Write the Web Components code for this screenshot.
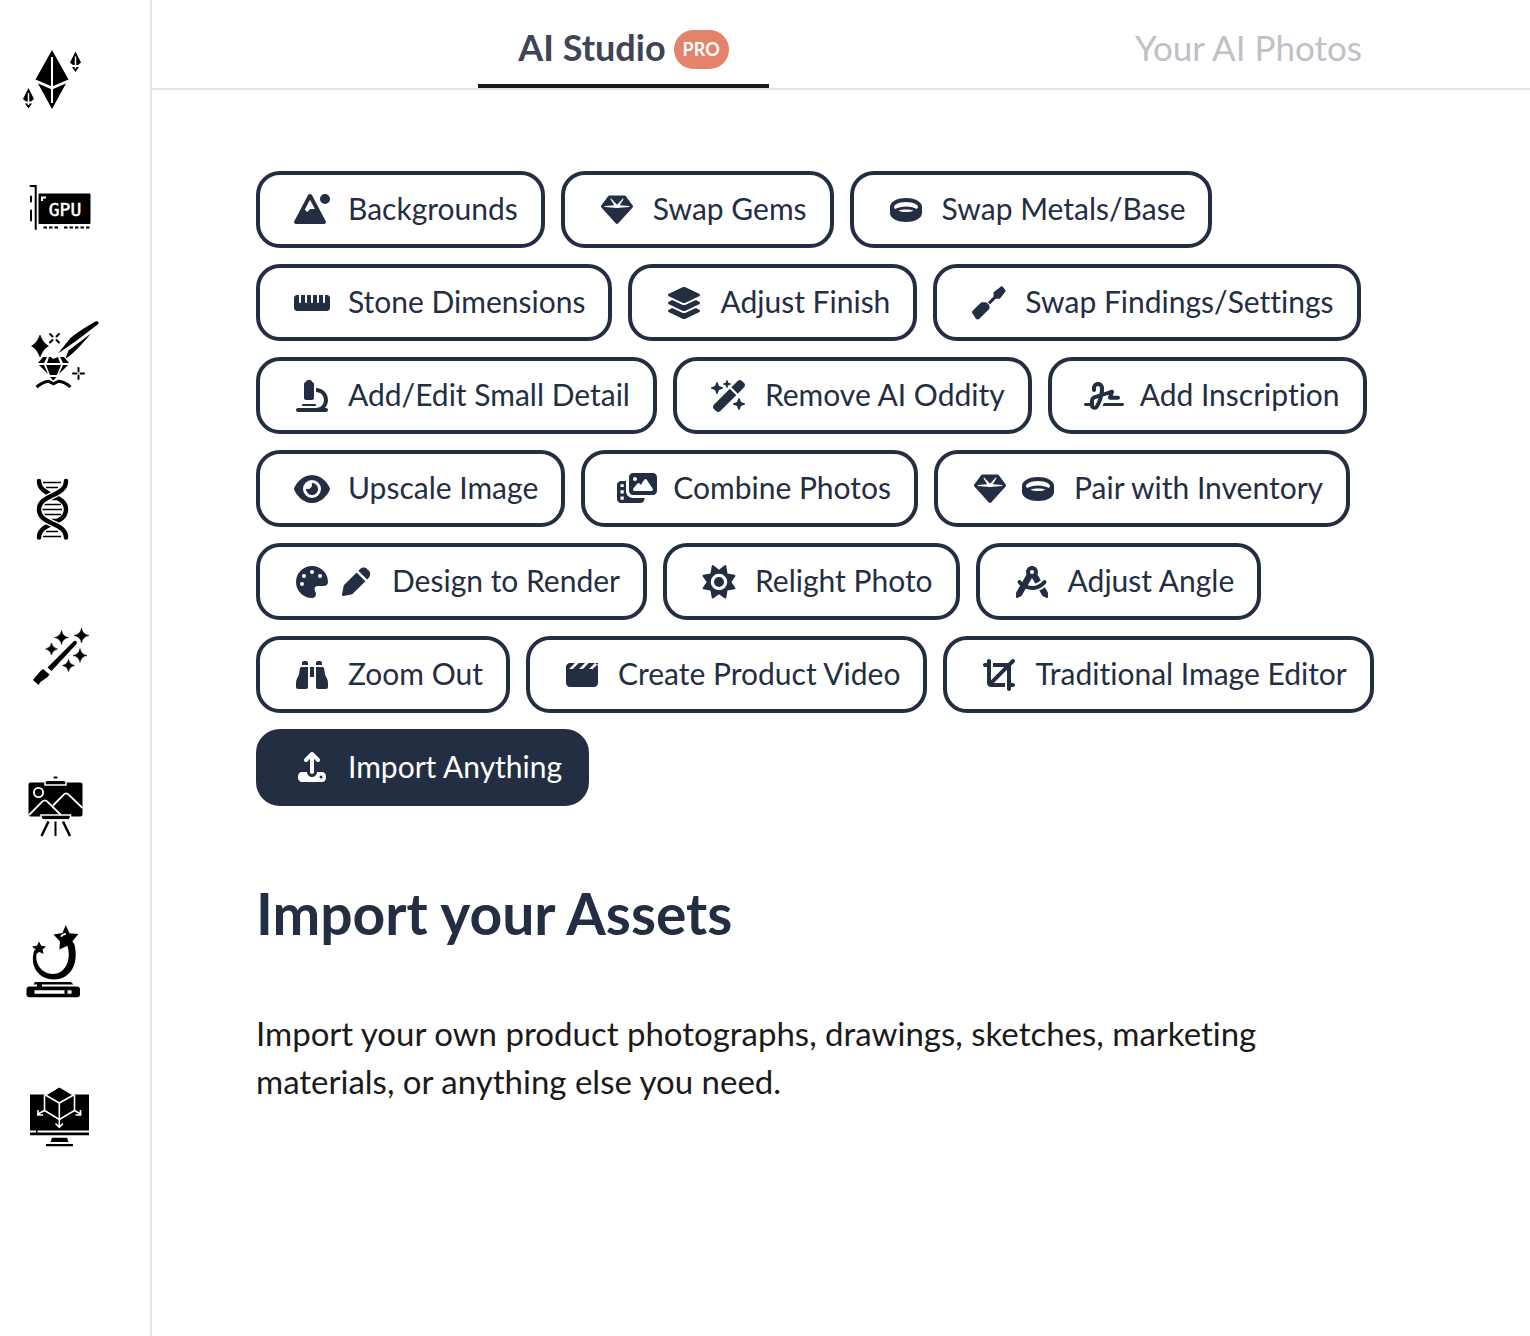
<!DOCTYPE html>
<html lang="en">
<head>
<meta charset="utf-8">
<title>AI Studio</title>
<style>
  body {
    margin: 0;
    background: #fff;
    color: #242e43;
    font-family: Lato, "Open Sans", sans-serif;
    font-variant-ligatures: none;
  }
</style>
</head>
<body>
<studio-shell>
  <side-rail slot="rail"></side-rail>

  <studio-tabs slot="tabs">
    <studio-tab active>AI Studio<pro-badge slot="badge">PRO</pro-badge></studio-tab>
    <studio-tab>Your AI Photos</studio-tab>
  </studio-tabs>

  <tool-list>
    <tool-chip icons="mountain">Backgrounds</tool-chip>
    <tool-chip icons="gem">Swap Gems</tool-chip>
    <tool-chip icons="ring">Swap Metals/Base</tool-chip>
    <tool-chip icons="ruler">Stone Dimensions</tool-chip>
    <tool-chip icons="layers">Adjust Finish</tool-chip>
    <tool-chip icons="screwdriver">Swap Findings/Settings</tool-chip>
    <tool-chip icons="microscope">Add/Edit Small Detail</tool-chip>
    <tool-chip icons="wand">Remove AI Oddity</tool-chip>
    <tool-chip icons="signature">Add Inscription</tool-chip>
    <tool-chip icons="eye">Upscale Image</tool-chip>
    <tool-chip icons="photos">Combine Photos</tool-chip>
    <tool-chip icons="gem ring">Pair with Inventory</tool-chip>
    <tool-chip icons="palette pen" tight>Design to Render</tool-chip>
    <tool-chip icons="sun">Relight Photo</tool-chip>
    <tool-chip icons="compass">Adjust Angle</tool-chip>
    <tool-chip icons="binoculars">Zoom Out</tool-chip>
    <tool-chip icons="clapper">Create Product Video</tool-chip>
    <tool-chip icons="crop">Traditional Image Editor</tool-chip>
    <tool-chip icons="upload" selected>Import Anything</tool-chip>
  </tool-list>

  <tool-intro>
    <span slot="title">Import your Assets</span>
    Import your own product photographs, drawings, sketches, marketing materials, or anything else you need.
  </tool-intro>
</studio-shell>

<script>
// Chip icons: [glyph width, path]. Every glyph is 512 units high.
const ICONS = {
  mountain: [576, "M223 18 4 436c-11 21 4 44 27 44h450c23 0 38-23 27-44L289 18c-14-24-52-24-66 0zM256 92l-84 158 40 36 46-46h76zM496 0a80 80 0 1 1 0 160 80 80 0 1 1 0-160z"],
  gem: [512, "M116.7 33.8c4.5-6.1 11.7-9.8 19.3-9.8l240 0c7.6 0 14.8 3.6 19.3 9.8l112 152c6.8 9.2 6.1 21.9-1.5 30.4l-232 256c-4.5 5-11 7.9-17.8 7.9s-13.2-2.9-17.8-7.9l-232-256c-7.7-8.5-8.3-21.2-1.5-30.4l112-152zm38.5 39.8c-3.3 2.5-4.2 7-2.1 10.5l57.4 95.6L63.3 192c-4.1 .3-7.3 3.8-7.3 8s3.2 7.6 7.3 8l192 16c.4 0 .9 0 1.3 0l192-16c4.1-.3 7.3-3.8 7.3-8s-3.2-7.6-7.3-8L301.5 179.8l57.4-95.6c2.1-3.5 1.2-8.1-2.1-10.5s-7.9-2-10.7 1L256 172.2 165.9 74.6c-2.8-3-7.4-3.4-10.7-1z"],
  ring: [512, "M64 208c0 7.8 4.4 18.7 17.1 30.3C126.5 214.1 188.9 200 256 200s129.5 14.1 174.9 38.3C443.6 226.7 448 215.8 448 208c0-12.3-10.8-32-47.9-50.6C364.9 139.8 314 128 256 128s-108.9 11.8-144.1 29.4C74.8 176 64 195.7 64 208zm192 40c-47 0-89.3 7.6-122.9 19.7C166.3 280.2 208.8 288 256 288s89.7-7.8 122.9-20.3C345.3 255.6 303 248 256 248zM0 208c0-49.6 39.4-85.8 83.3-107.8C129.1 77.3 190.3 64 256 64s126.9 13.3 172.7 36.2c43.9 22 83.3 58.2 83.3 107.8l0 96c0 49.6-39.4 85.8-83.3 107.8C382.9 434.7 321.7 448 256 448s-126.9-13.3-172.7-36.2C39.4 389.8 0 353.6 0 304l0-96z"],
  ruler: [576, "M0 336c0 26.5 21.5 48 48 48h480c26.5 0 48-21.5 48-48V176c0-26.5-21.5-48-48-48h-32v112c0 8.8-7.2 16-16 16s-16-7.2-16-16V128h-64v112c0 8.8-7.2 16-16 16s-16-7.2-16-16V128h-64v112c0 8.8-7.2 16-16 16s-16-7.2-16-16V128h-64v112c0 8.8-7.2 16-16 16s-16-7.2-16-16V128h-64v112c0 8.8-7.2 16-16 16s-16-7.2-16-16V128H48c-26.5 0-48 21.5-48 48v160z"],
  layers: [576, "M264.5 5.2c14.9-6.9 32.1-6.9 47 0l218.6 101c8.5 3.9 13.9 12.4 13.9 21.8s-5.4 17.9-13.9 21.8l-218.6 101c-14.9 6.9-32.1 6.9-47 0L45.9 149.8C37.4 145.8 32 137.3 32 128s5.4-17.9 13.9-21.8L264.5 5.2zM476.9 209.6l53.2 24.6c8.5 3.9 13.9 12.4 13.9 21.8s-5.4 17.9-13.9 21.8l-218.6 101c-14.9 6.9-32.1 6.9-47 0L45.9 277.8C37.4 273.8 32 265.3 32 256s5.4-17.9 13.9-21.8l53.2-24.6 152 70.2c23.4 10.8 50.4 10.8 73.8 0l152-70.2zm-152 198.2l152-70.2 53.2 24.6c8.5 3.9 13.9 12.4 13.9 21.8s-5.4 17.9-13.9 21.8l-218.6 101c-14.9 6.9-32.1 6.9-47 0L45.9 405.8C37.4 401.8 32 393.3 32 384s5.4-17.9 13.9-21.8l53.2-24.6 152 70.2c23.4 10.8 50.4 10.8 73.8 0z"],
  screwdriver: [512, "M474 -4c-9-9-22-9-32-2l-104 80c-6 5-9 12-9 19v60l-92 92c7 4 13 9 19 15s11 12 15 19l92-92h54c8 0 15-4 19-9l80-104c7-10 7-23-2-32zM142 244c-9 0-16 4-22 10L-5 379c-12 12-14 31-4 45l54 78c13 20 41 23 57 6l150-150c9-9 14-20 14-32 0-46-36-82-82-82z"],
  microscope: [512, "M160 32c0-17.7 14.3-32 32-32h32c17.7 0 32 14.3 32 32c17.7 0 32 14.3 32 32V288c0 17.7-14.3 32-32 32H160c-17.7 0-32-14.3-32-32V64c0-17.7 14.3-32 32-32zM32 448H320c70.7 0 128-57.3 128-128s-57.3-128-128-128V128c106 0 192 86 192 192c0 49.2-18.5 94-48.9 128H480c17.7 0 32 14.3 32 32s-14.3 32-32 32H32c-17.7 0-32-14.3-32-32s14.3-32 32-32zm80-64H304c8.8 0 16 7.2 16 16s-7.2 16-16 16H112c-8.8 0-16-7.2-16-16s7.2-16 16-16z"],
  wand: [576, "M234.7 42.7L197 56.8c-3 1.1-5 4-5 7.2s2 6.1 5 7.2l37.7 14.1L248.8 123c1.1 3 4 5 7.2 5s6.1-2 7.2-5l14.1-37.7L315 71.2c3-1.1 5-4 5-7.2s-2-6.1-5-7.2L277.3 42.7 263.2 5c-1.1-3-4-5-7.2-5s-6.1 2-7.2 5zM46.1 395.4c-18.7 18.7-18.7 49.1 0 67.9l34.6 34.6c18.7 18.7 49.1 18.7 67.9 0L404.3 242.3 301.8 139.8zM325.8 115.8 428.3 218.3 529.9 116.5c18.7-18.7 18.7-49.1 0-67.9L495.3 14.1c-18.7-18.7-49.1-18.7-67.9 0zM7.5 117.2C3 118.9 0 123.2 0 128s3 9.1 7.5 10.8L64 160l21.2 56.5c1.7 4.5 6 7.5 10.8 7.5s9.1-3 10.8-7.5L128 160l56.5-21.2c4.5-1.7 7.5-6 7.5-10.8s-3-9.1-7.5-10.8L128 96 106.8 39.5C105.1 35 100.8 32 96 32s-9.1 3-10.8 7.5L64 96zm352 256c-4.5 1.7-7.5 6-7.5 10.8s3 9.1 7.5 10.8L416 416l21.2 56.5c1.7 4.5 6 7.5 10.8 7.5s9.1-3 10.8-7.5L480 416l56.5-21.2c4.5-1.7 7.5-6 7.5-10.8s-3-9.1-7.5-10.8L480 352l-21.2-56.5c-1.7-4.5-6-7.5-10.8-7.5s-9.1 3-10.8 7.5L416 352z"],
  signature: [640, "M192 128c0-17.7 14.3-32 32-32s32 14.3 32 32v7.8c0 27.7-2.4 55.3-7.1 82.5l-84.4 25.3c-40.6 12.2-68.4 49.6-68.4 92v32.4H24c-13.3 0-24 10.7-24 24s10.7 24 24 24H96.7c5.3 34.3 35 59.5 71.8 59.5c26 0 50-13.9 62.9-36.5l13.9-24.3c26.8-47 46.5-97.7 58.4-150.5l94.4-28.3-12.5 37.5c-3.3 9.8-1.6 20.5 4.4 28.8s15.7 13.3 26 13.3H544c17.7 0 32-14.3 32-32s-14.3-32-32-32H460.4l18-53.9c3.8-11.3 .9-23.8-7.4-32.4s-20.7-11.8-32.2-8.4L316.4 198.1c2.4-20.7 3.6-41.4 3.6-62.3V128c0-53-43-96-96-96s-96 43-96 96v32c0 17.7 14.3 32 32 32s32-14.3 32-32V128zm-9.2 177l49-14.7c-10.4 33.8-24.5 66.4-42.1 97.2l-13.9 24.3c-1.5 2.6-4.3 4.3-7.4 4.3c-4.7 0-8.5-3.8-8.5-8.5V335.6c0-14.1 9.3-26.6 22.8-30.7zM616 416c13.3 0 24-10.7 24-24s-10.7-24-24-24H318c-6.7 16.3-14.2 32.3-22.3 48H616z"],
  eye: [576, "M288 32c-80.8 0-145.5 36.8-192.6 80.6C48.6 156 17.3 208 2.5 243.7c-3.3 7.9-3.3 16.7 0 24.6C17.3 304 48.6 356 95.4 399.4C142.5 443.2 207.2 480 288 480s145.5-36.8 192.6-80.6c46.8-43.5 78.1-95.4 93-131.1c3.3-7.9 3.3-16.7 0-24.6c-14.9-35.7-46.2-87.7-93-131.1C433.5 68.8 368.8 32 288 32zM144 256a144 144 0 1 1 288 0 144 144 0 1 1 -288 0zm144-64c0 35.3-28.7 64-64 64c-7.1 0-13.9-1.2-20.3-3.3c-5.5-1.8-11.9 1.6-11.7 7.4c.3 6.9 1.3 13.8 3.2 20.7c13.7 51.2 66.4 81.6 117.6 67.9s81.6-66.4 67.9-117.6c-11.1-41.5-47.8-69.4-88.6-71.1c-5.8-.2-9.2 6.1-7.4 11.7c2.1 6.4 3.3 13.2 3.3 20.3z"],
  photos: [640, "M256 0H576c35.3 0 64 28.7 64 64V288c0 35.3-28.7 64-64 64H256c-35.3 0-64-28.7-64-64V64c0-35.3 28.7-64 64-64zM476 106.7C471.5 100 464 96 456 96s-15.5 4-20 10.7l-56 84L362.7 169c-4.6-5.7-11.5-9-18.7-9s-14.2 3.3-18.7 9l-64 80c-5.8 7.2-6.9 17.1-2.9 25.4s12.4 13.6 21.6 13.6H552c8.9 0 17-4.9 21.2-12.7s3.7-17.3-1.2-24.6zM320 96a32 32 0 1 0 -64 0 32 32 0 1 0 64 0zM64 128h80v160c0 62 50 112 112 112h186v8c0 40-32 72-72 72H64c-35 0-64-29-64-64V192c0-35 29-64 64-64zM56 180v44h52v-44zM56 276v52h52v-52zM56 376v52h52v-52z"],
  palette: [512, "M512 256c0 .9 0 1.8 0 2.7c-.4 36.5-33.6 61.3-70.1 61.3H344c-26.5 0-48 21.5-48 48c0 3.4 .4 6.7 1 9.9c2.1 10.2 6.5 20 10.8 29.9c6.1 13.8 12.1 27.5 12.1 42c0 31.8-21.6 60.7-53.4 62c-3.5 .1-7 .2-10.6 .2C114.6 512 0 397.4 0 256S114.6 0 256 0S512 114.6 512 256zM128 288a32 32 0 1 0 -64 0 32 32 0 1 0 64 0zm0-96a32 32 0 1 0 0-64 32 32 0 1 0 0 64zM288 96a32 32 0 1 0 -64 0 32 32 0 1 0 64 0zm96 96a32 32 0 1 0 0-64 32 32 0 1 0 0 64z"],
  pen: [448, "M40 296 234 102 374 242 180 436c-9 9-20 15-32 19L24 479c-14 3-27-10-24-24L24 328c3-12 8-23 16-32zM262 74l24-24c34-34 88-34 122 0l-6 6 24 12c34 34 34 88 0 122l-24 24z"],
  sun: [512, "M362 -14c5 2 9 7 10 12L392 119 506 140c5 1 10 5 12 10s1 11-2 16L453 256l63 90c3 5 4 11 2 16s-7 9-12 10L392 393 372 506c-1 5-5 10-10 12s-11 1-16-2L256 453l-90 63c-5 3-11 4-16 2s-9-7-10-12L119 393 6 372c-5-1-10-5-12-10s-1-11 2-16L59 256-4 166c-3-5-4-11-2-16s7-9 12-10L119 119 140 -2c1-5 5-10 10-12s11-1 16 2L256 59l90-71c5-3 11-4 16-2zM124 256a132 132 0 1 0 264 0 132 132 0 1 0-264 0zM176 256a80 80 0 1 1 160 0 80 80 0 1 1-160 0z"],
  compass: [512, "M352 96c0 14.3-3.1 27.9-8.8 40.2L396 227.4c-23.7 25.3-54.2 44.1-88.5 53.6L256 192h0 0l-68 117.5c21.5 6.8 44.3 10.5 68.1 10.5c70.7 0 133.8-32.7 174.9-84c11.1-13.8 31.2-16 45-5s16 31.2 5 45C428.1 341.8 347 384 256 384c-35.4 0-69.4-6.4-100.7-18.1L98.7 463.7C94 471.8 87 478.4 78.6 482.6L23.2 510.3c-5 2.5-10.9 2.2-15.6-.7S0 501.5 0 496V440.6c0-8.4 2.2-16.7 6.5-24.1l60-103.7C53.7 301.6 41.8 289.3 31.2 276c-11.1-13.8-8.8-33.9 5-45s33.9-8.8 45 5c5.7 7.1 11.8 13.8 18.2 20.1l69.4-119.9c-5.6-12.2-8.8-25.8-8.8-40.2c0-53 43-96 96-96s96 43 96 96zm21 297.9c32.6-12.8 62.5-30.8 88.9-52.9l43.7 75.5c4.2 7.3 6.5 15.6 6.5 24.1V496c0 5.5-2.9 10.7-7.6 13.6s-10.6 3.2-15.6 .7l-55.4-27.7c-8.4-4.2-15.4-10.8-20.1-18.9L373 393.9zM256 128a32 32 0 1 0 0-64 32 32 0 1 0 0 64z"],
  binoculars: [512, "M128 32h32c17.7 0 32 14.3 32 32V96H96V64c0-17.7 14.3-32 32-32zm64 96V448c0 17.7-14.3 32-32 32H32c-17.7 0-32-14.3-32-32V388.9c0-34.6 9.4-68.6 27.2-98.3C40.9 267.8 49.7 242.4 53 216L60.5 156c2-16 15.6-28 31.8-28H192zm227.8 0c16.1 0 29.8 12 31.8 28L459 216c3.3 26.4 12.1 51.8 25.8 74.6c17.8 29.7 27.2 63.7 27.2 98.3V448c0 17.7-14.3 32-32 32H352c-17.7 0-32-14.3-32-32V128h99.8zM320 64c0-17.7 14.3-32 32-32h32c17.7 0 32 14.3 32 32V96H320V64zm-32 64V288H224V128h64z"],
  clapper: [512, "M64 64H448c35 0 64 29 64 64V384c0 35-29 64-64 64H64c-35 0-64-29-64-64V128c0-35 29-64 64-64zM48 160h60l96-96h-60zM208 160h60l96-96h-60zM368 160h60l84-84v-12h-48z"],
  crop: [512, "M448 109.3l54.6-54.6c12.5-12.5 12.5-32.8 0-45.3s-32.8-12.5-45.3 0L402.7 64H160v64H338.7L128 338.7V32c0-17.7-14.3-32-32-32S64 14.3 64 32V64H32C14.3 64 0 78.3 0 96s14.3 32 32 32H64V384c0 35.3 28.7 64 64 64H352V384H173.3L384 173.3 384 480c0 17.7 14.3 32 32 32s32-14.3 32-32V448h32c17.7 0 32-14.3 32-32s-14.3-32-32-32H448z"],
  upload: [448, "M246.6 9.4c-12.5-12.5-32.8-12.5-45.3 0l-96 96c-12.5 12.5-12.5 32.8 0 45.3s32.8 12.5 45.3 0L192 109.3V320c0 17.7 14.3 32 32 32s32-14.3 32-32V109.3l41.4 41.4c12.5 12.5 32.8 12.5 45.3 0s12.5-32.8 0-45.3zM64 320h80c0 44 36 80 80 80s80-36 80-80h80c35 0 64 29 64 64v32c0 35-29 64-64 64H64c-35 0-64-29-64-64v-32c0-35 29-64 64-64zM392 400a24 24 0 1 0-48 0 24 24 0 1 0 48 0z"]
};

// Four-pointed sparkle around (x, y), waist is half the width of its middle
function sparkle(x, y, w, h = w, waist = 1) {
  return `<path d="M${x} ${y - h}Q${x + waist} ${y - waist} ${x + w} ${y}Q${x + waist} ${y + waist} ${x} ${y + h}Q${x - waist} ${y + waist} ${x - w} ${y}Q${x - waist} ${y - waist} ${x} ${y - h}z" stroke="#000" stroke-width=".5"/>`;
}

const miniEther = `
  <path d="M0-10 5.5 1 2.5 3.5h-5L-5.5 1zM-3.5 5.5h7L0 10.5z"/>
  <path d="M0-5V7" stroke="#fff" stroke-width="1.5"/>`;

// Sidebar artwork, one 150 x 150 tile each
const RAIL = [
  ["Crystals", `
    <path d="M52 50 68.5 79.5 52 86.5 35.5 79.5zM38 83.5 52 89.5 66 83.5 52 109z"/>
    <path d="M52 57V103" stroke="#fff" stroke-width="2"/>
    <g transform="translate(75.5 61.5)">${miniEther}</g>
    <g transform="translate(28.5 98)">${miniEther}</g>`],
  ["GPU", `
    <rect x="38.5" y="43.5" width="52" height="30.5" rx="1"/>
    <path d="M30.5 36h5.2v43M31 46.5v5M31 60.5v10" fill="none" stroke="#000" stroke-width="2" stroke-linecap="round"/>
    <path d="M43.5 77.5h15M64 77.5h25.5" stroke="#000" stroke-width="2" stroke-dasharray="3.5 2"/>
    <path d="M42 51v-3.5h4" fill="none" stroke="#fff" stroke-width="2"/>
    <text x="65" y="66" text-anchor="middle" fill="#fff" stroke="#fff" stroke-width=".5" font-family="DejaVu Sans Mono, monospace" font-size="18">GPU</text>`],
  ["Jewel polish", `
    <path d="M58 53.5 70 38.5Q77 32 95.5 21.5c2.5-1 4 1 2.5 2.8L76 41zM91 33.5 68.5 50.5 65.5 58.5Q74 54 91 33.5z"/>
    ${sparkle(40, 46, 8.5, 11, 3)}
    <path d="M50 34l2.5 2.5M56.5 40l2.5 2.5M59 34l-2.5 2.5M52.5 40 50 42.5M78.5 68v3.5M78.5 75.5V79M73 73.5h3.5M80.5 73.5h3.5" stroke="#000" stroke-width="2" stroke-linecap="round"/>
    <path d="M43 57h4l-3 6h-6zM49 57h2l2 2 5-2 2 6H47zM60 57h4l5 6h-6zM39 65h5l4 9zM46 65h15l-4 10h-7zM63 65h5l-9 9zM50 77h6.5l-3.2 3.5z"/>
    <path d="M36.5 87q7-5.5 12-5.8l5 2.6 5-2.6q6 .3 12 5.8" fill="none" stroke="#000" stroke-width="3"/>`],
  ["DNA", `
    <g fill="none" stroke="#000">
      <path d="M43 32.5h18M46 37.5h12M46 49.5h12M43 54.5h18M42 59.5h20M43 64.5h18M46 69.5h12M46 81.5h12M43 86.5h18" stroke-width="1.7"/>
      <path d="M39 31C39 47 66 44 66 59.5S39 72 39 87.5" stroke-width="4.5" stroke-linecap="round"/>
      <path d="M66 31C66 47 39 44 39 59.5S66 72 66 87.5" stroke="#fff" stroke-width="7"/>
      <path d="M66 31C66 47 39 44 39 59.5S66 72 66 87.5" stroke-width="4.5" stroke-linecap="round"/>
    </g>`],
  ["Magic wand", `
    <path d="M47.5 67.5 73.5 41.5c2-1.8 4.5.5 2.8 2.7L51.5 71zM43 69 49.5 74.5 47.5 77 40.5 82 38.5 85 33 80 35 77.5 40 71.5z"/>
    ${sparkle(61.5, 37.5, 7)}${sparkle(81.5, 35.5, 7.5)}${sparkle(51.5, 49, 6)}${sparkle(80, 55.5, 7)}${sparkle(68.5, 65.5, 6)}`],
  ["Easel", `
    <rect x="28.5" y="32.5" width="54" height="34" rx="2"/>
    <path d="M45 31.5v3.5h21v-3.5M41 68v-3h29.5v3" stroke="#fff" stroke-width="1.5"/>
    <rect x="47" y="31" width="17" height="2.6"/><rect x="53.5" y="26.5" width="4" height="2" rx="1"/>
    <rect x="42.5" y="66.5" width="26.5" height="2.6"/>
    <g fill="none" stroke="#fff" stroke-width="1.8">
      <circle cx="38.5" cy="42.5" r="4.6"/>
      <path d="M29 65 42 51.8q2.8-2.8 5.6 0L61 65M53 55.5 63.5 44.8q2.7-2.8 5.4 0L82.5 58"/>
    </g>
    <path d="M48.5 71.5 41.5 86M63 71.5 70 86" stroke="#000" stroke-width="2.5"/><path d="M55.5 71.5V86" stroke="#000" stroke-width="2"/>`],
  ["Crystal trophy", `
    <path d="M65.7 25 69.5 33.2 78.5 34 72.5 41 75 49.5 67 46 59.3 49.5 60 41.5 53.5 34.5 62.5 33zM39 41.5 41.2 45.8 46 46.5 42.5 49.5 43.5 54 39.5 52 35 54 35.5 49.5 32 46.5 37 45.8z"/>
    <path d="M34.5 50C29 65 38 79.5 54 79.5S80 64 74 43L67.5 46C72 62 64 74 53 74S33 63 37.5 51z"/>
    <path d="M61.5 36q1-1.500 3.500-2" fill="none" stroke="#fff" stroke-width="2" stroke-linecap="round"/>
    <path d="M35 82h36l2.5 2.5H33.5zM37 84h5v3h-5z"/>
    <rect x="26.5" y="86.5" width="53.5" height="10.7" rx="3"/>
    <path d="M34.5 90.3H64.5v3.4H34.5zM67.5 90.3H71.5v3.4H67.5z" fill="#fff"/>`],
  ["3D display", `
    <path d="M30 44.5H89V80.5H30zM30 82.5H89v2.8H30zM52 87.8h15l1.5 4.2h-18zM46 94h27v2.3H46zM36 80h1.5v3H36z"/>
    <path d="M59.3 36.5 74.5 45.5V60.5L59.3 69.5 44.5 60.5V45.5z" stroke="#fff" stroke-width="1.6"/>
    <path d="M45 44.8 59.3 53 74 44.8M59.3 53V77M55.5 73.5 59.3 77.3 63 73.5M44.5 60.5 37 64.5M38 60v5h5M74.5 60.5 81.5 64.5M80.5 60v5h-5" fill="none" stroke="#fff" stroke-width="1.6"/>`]
];

class ToolIcon extends HTMLElement {
  constructor() {
    super();
    this.attachShadow({ mode: "open" });
  }

  connectedCallback() {
    const [width, path] = ICONS[this.getAttribute("name")];
    this.shadowRoot.innerHTML = `
      <style>
        :host { display: block; width: 40px; height: 32px; }
        svg { display: block; width: 100%; height: 100%; overflow: visible; fill: currentColor; fill-rule: evenodd; }
      </style>
      <svg viewBox="${(width - 640) / 2} 0 640 512" aria-hidden="true"><path d="${path}"/></svg>
    `;
  }
}

class ToolChip extends HTMLElement {
  constructor() {
    super();
    this.attachShadow({ mode: "open" });
  }

  connectedCallback() {
    const icons = this.getAttribute("icons").split(" ");
    this.shadowRoot.innerHTML = `
      <style>
        :host { display: block; }
        button {
          display: flex;
          align-items: center;
          gap: 16px;
          height: 77px;
          padding: 0 23px 0 32px;
          border: 4px solid #242e43;
          border-radius: 24px;
          background: #fff;
          color: #242e43;
          font-family: inherit;
          font-size: 30px;
          font-variant-ligatures: none;
          line-height: 40px;
          white-space: nowrap;
          cursor: pointer;
        }
        .icons { display: flex; gap: 8px; }
        .label { padding-bottom: 4px; }
        :host([tight]) .icons { gap: 4px; }
        :host([selected]) button { background: #242e43; color: #fff; }
      </style>
      <button type="button" aria-pressed="${this.hasAttribute("selected")}">
        <span class="icons">${icons.map((name) => `<tool-icon name="${name}"></tool-icon>`).join("")}</span>
        <span class="label"><slot></slot></span>
      </button>
    `;
  }
}

class ToolList extends HTMLElement {
  constructor() {
    super();
    this.attachShadow({ mode: "open" });
    this.shadowRoot.innerHTML = `
      <style>
        :host { display: flex; flex-wrap: wrap; gap: 16px; }
      </style>
      <slot></slot>
    `;
  }
}

class ToolIntro extends HTMLElement {
  constructor() {
    super();
    this.attachShadow({ mode: "open" });
    this.shadowRoot.innerHTML = `
      <style>
        :host { display: block; margin-top: 71px; }
        h1 { margin: 0 0 60px; font-size: 57px; line-height: 72px; font-weight: 700; }
        p { margin: 0; color: #1a1a1a; font-size: 33px; line-height: 48px; }
      </style>
      <h1><slot name="title"></slot></h1>
      <p><slot></slot></p>
    `;
  }
}

class ProBadge extends HTMLElement {
  constructor() {
    super();
    this.attachShadow({ mode: "open" });
    this.shadowRoot.innerHTML = `
      <style>
        :host {
          display: block;
          padding: 0 9px;
          border-radius: 20px;
          background: #e3836b;
          color: #fff;
          font-size: 18px;
          line-height: 39px;
          font-weight: 700;
        }
      </style>
      <slot></slot>
    `;
  }
}

class StudioTab extends HTMLElement {
  constructor() {
    super();
    this.attachShadow({ mode: "open" });
    this.shadowRoot.innerHTML = `
      <style>
        :host { display: block; margin-left: auto; }
        a {
          display: flex;
          align-items: center;
          gap: 8px;
          height: 70px;
          padding: 14px 40px 0;
          border-bottom: 4px solid transparent;
          color: #bfc1c7;
          font-size: 35px;
          line-height: 48px;
          text-decoration: none;
          white-space: nowrap;
        }
        .label { padding-bottom: 4px; }
        :host([active]) a { border-color: #1a1a1a; color: #3d4557; font-size: 36px; font-weight: 700; }
      </style>
      <a href="#"><span class="label"><slot></slot></span><slot name="badge"></slot></a>
    `;
  }
}

class StudioTabs extends HTMLElement {
  constructor() {
    super();
    this.attachShadow({ mode: "open" });
    this.shadowRoot.innerHTML = `
      <style>
        :host { display: block; border-bottom: 2px solid #e5e5e5; }
        nav { display: flex; padding-right: 128px; }
      </style>
      <nav><slot></slot></nav>
    `;
  }
}

class SideRail extends HTMLElement {
  constructor() {
    super();
    this.attachShadow({ mode: "open" });
    this.shadowRoot.innerHTML = `
      <style>
        :host { display: block; }
        nav { display: flex; flex-direction: column; }
        a { display: block; color: #000; }
        svg { display: block; width: 150px; height: 150px; }
      </style>
      <nav>${RAIL.map(([label, art]) => `<a href="#" aria-label="${label}"><svg viewBox="0 0 150 150">${art}</svg></a>`).join("")}</nav>
    `;
  }
}

class StudioShell extends HTMLElement {
  constructor() {
    super();
    this.attachShadow({ mode: "open" });
    this.shadowRoot.innerHTML = `
      <style>
        :host { display: grid; grid-template-columns: 152px 1fr; min-height: 100vh; }
        aside { border-right: 2px solid #e5e5e5; }
        main { padding: 81px 144px 80px 104px; }
      </style>
      <aside><slot name="rail"></slot></aside>
      <div>
        <slot name="tabs"></slot>
        <main><slot></slot></main>
      </div>
    `;
  }
}

customElements.define("tool-icon", ToolIcon);
customElements.define("tool-chip", ToolChip);
customElements.define("tool-list", ToolList);
customElements.define("tool-intro", ToolIntro);
customElements.define("pro-badge", ProBadge);
customElements.define("studio-tab", StudioTab);
customElements.define("studio-tabs", StudioTabs);
customElements.define("side-rail", SideRail);
customElements.define("studio-shell", StudioShell);
</script>
</body>
</html>
